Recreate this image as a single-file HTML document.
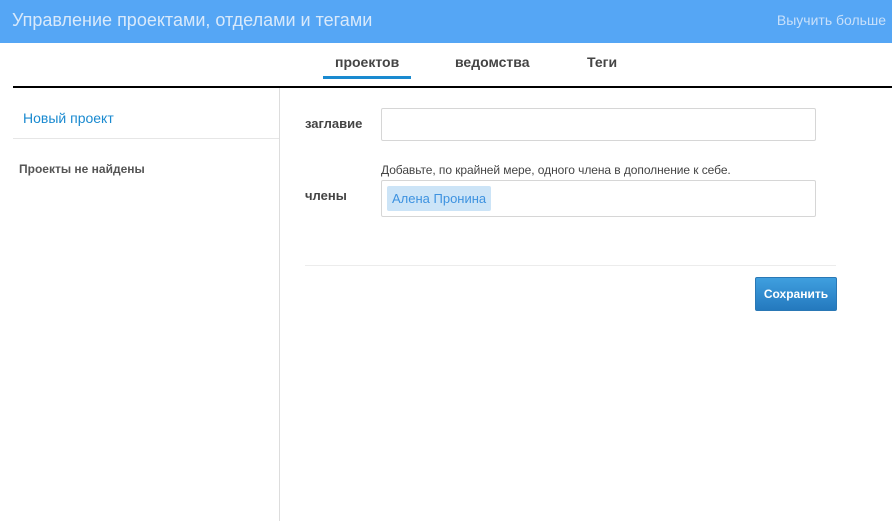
<!DOCTYPE html>
<html><head><meta charset="utf-8"><style>
*{box-sizing:border-box;margin:0;padding:0}
body{width:892px;height:521px;overflow:hidden;background:#fff;font-family:"Liberation Sans",Arial,sans-serif;position:relative}
.hdr{position:absolute;left:0;top:0;width:892px;height:43px;background:#55a6f5}
.hdr .t{position:absolute;left:12px;top:10px;font-size:18px;color:#d8e9fb}
.hdr .r{position:absolute;right:6px;top:12px;font-size:14px;color:#c8e0fa}
.tab{position:absolute;top:54px;font-size:14px;font-weight:bold;color:#444}
.ul{position:absolute;left:323px;top:76px;width:88px;height:3px;background:#1a8ad0}
.bl{position:absolute;left:13px;top:86px;width:879px;height:2px;background:#000}
.vl{position:absolute;left:279px;top:88px;width:1px;height:433px;background:#ddd}
.sd{position:absolute;left:13px;top:138px;width:266px;height:1px;background:#e6e6e6}
.np{position:absolute;left:23px;top:110px;font-size:14px;color:#1a8ad0}
.nf{position:absolute;left:19px;top:162px;font-size:12px;font-weight:bold;color:#555}
.lbl{position:absolute;left:305px;font-size:13px;font-weight:bold;color:#444}
.inp{position:absolute;left:381px;width:435px;border:1px solid #d6d6d6;border-radius:2px}
.help{position:absolute;left:381px;top:163px;font-size:12px;color:#444;letter-spacing:-0.07px}
.tag{position:absolute;left:387px;top:186px;width:104px;height:25px;background:#cce4f7;border-radius:2px;color:#3d92e0;font-size:13px;padding:5px 0 0 5px}
.hr{position:absolute;left:305px;top:265px;width:531px;height:1px;background:#ececec}
.btn{position:absolute;left:755px;top:277px;width:82px;height:34px;background:linear-gradient(#3f9fdf,#2479be);border:1px solid #2a78b5;border-radius:2px;color:#fff;font-size:12px;font-weight:bold;text-align:center;line-height:32px}
</style></head><body>
<div class="hdr"><div class="t">Управление проектами, отделами и тегами</div><div class="r">Выучить больше</div></div>
<div class="tab" style="left:335px">проектов</div>
<div class="tab" style="left:455px">ведомства</div>
<div class="tab" style="left:587px">Теги</div>
<div class="ul"></div>
<div class="bl"></div>
<div class="vl"></div>
<div class="np">Новый проект</div>
<div class="sd"></div>
<div class="nf">Проекты не найдены</div>
<div class="lbl" style="top:116px">заглавие</div>
<div class="inp" style="top:108px;height:33px"></div>
<div class="help">Добавьте, по крайней мере, одного члена в дополнение к себе.</div>
<div class="lbl" style="top:188px">члены</div>
<div class="inp" style="top:180px;height:37px"></div>
<div class="tag">Алена Пронина</div>
<div class="hr"></div>
<div class="btn">Сохранить</div>
</body></html>
